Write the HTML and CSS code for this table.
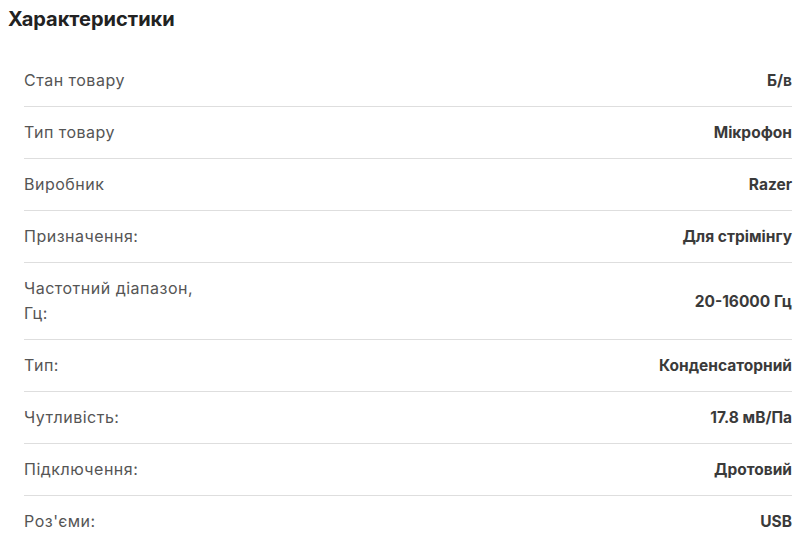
FILE: index.html
```html
<!DOCTYPE html>
<html lang="uk">
<head>
<meta charset="utf-8">
<link rel="stylesheet" href="styles.css">
</head>
<body>
<section class="specs">
  <h2 class="specs-title">Характеристики</h2>
  <div class="specs-list">
    <div class="row"><div class="label">Стан товару</div><div class="value">Б/в</div></div>
    <div class="row"><div class="label">Тип товару</div><div class="value">Мікрофон</div></div>
    <div class="row"><div class="label">Виробник</div><div class="value">Razer</div></div>
    <div class="row"><div class="label">Призначення:</div><div class="value">Для стрімінгу</div></div>
    <div class="row"><div class="label">Частотний діапазон, Гц:</div><div class="value">20-16000 Гц</div></div>
    <div class="row"><div class="label">Тип:</div><div class="value">Конденсаторний</div></div>
    <div class="row"><div class="label">Чутливість:</div><div class="value">17.8 мВ/Па</div></div>
    <div class="row"><div class="label">Підключення:</div><div class="value">Дротовий</div></div>
    <div class="row"><div class="label">Роз'єми:</div><div class="value">USB</div></div>
  </div>
</section>
</body>
</html>
```
FILE: styles.css
```css
html, body {
  margin: 0;
  padding: 0;
  background: #fff;
}
body {
  padding: 0 8px;
  font-family: "Inter", "Noto Sans", sans-serif;
}
.specs-title {
  margin: 0;
  padding-top: 6px;
  font-size: 20px;
  line-height: 26px;
  font-weight: 700;
  color: #222;
}
.specs-list {
  margin-top: 23px;
  padding-left: 16px;
  padding-right: 2px;
}
.row {
  display: flex;
  justify-content: space-between;
  align-items: center;
  padding: 13px 0;
  line-height: 25px;
  border-bottom: 1px solid #dedede;
}
.row:last-child {
  border-bottom: none;
}
.label {
  max-width: 190px;
  font-size: 16px;
  letter-spacing: 0.5px;
  color: #555;
}
.value {
  font-size: 15.5px;
  font-weight: 700;
  color: #3a3a3a;
  text-align: right;
}
```
